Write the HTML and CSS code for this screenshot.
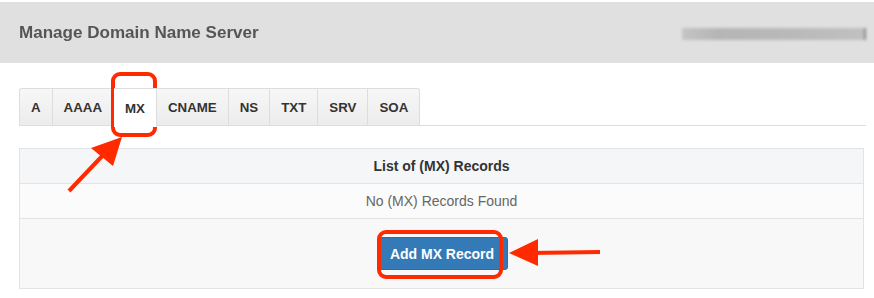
FILE: index.html
```html
<!DOCTYPE html>
<html>
<head>
<meta charset="utf-8">
<title>Manage Domain Name Server</title>
<link rel="stylesheet" href="styles.css">
</head>
<body>
    <div class="header">
        <h2 class="title">Manage Domain Name Server</h2>
        <div class="domain-blur"></div>
    </div>
    <div class="content">
        <div class="tabs">
            <a class="tab">A</a>
            <a class="tab">AAAA</a>
            <a class="tab active">MX</a>
            <a class="tab">CNAME</a>
            <a class="tab">NS</a>
            <a class="tab">TXT</a>
            <a class="tab">SRV</a>
            <a class="tab">SOA</a>
        </div>
        <div class="records">
            <div class="row row-head">List of (MX) Records</div>
            <div class="row row-empty">No (MX) Records Found</div>
            <div class="row row-action">
                <button class="btn-add">Add MX Record</button>
            </div>
        </div>
    </div>

    <!-- annotation marks drawn over the page -->
    <svg class="marks" width="874" height="298" viewBox="0 0 874 298">
        <rect x="113" y="74" width="42" height="61" rx="7" fill="none" stroke="#ff2a00" stroke-width="4"/>
        <line x1="69" y1="191" x2="106" y2="152" stroke="#ff2a00" stroke-width="4"/>
        <polygon points="122,137 91,148 113,166" fill="#ff2a00"/>
        <rect x="379" y="232" width="122" height="45" rx="7" fill="none" stroke="#ff2a00" stroke-width="4"/>
        <line x1="600" y1="252" x2="530" y2="253" stroke="#ff2a00" stroke-width="4"/>
        <polygon points="509,253 538,239 538,266" fill="#ff2a00"/>
    </svg>
</body>
</html>
```

FILE: styles.css
```css
body {
    margin: 0;
    font-family: "Liberation Sans", Arial, Helvetica, sans-serif;
    background: #fff;
    color: #333;
    position: relative;
    width: 874px;
    height: 298px;
    overflow: hidden;
}

.header {
    margin-top: 2px;
    height: 61px;
    background: #dfe0df;
    display: flex;
    align-items: center;
    justify-content: space-between;
    padding: 0 8px 0 19px;
}
.title {
    margin: 0;
    font-size: 16px;
    font-weight: bold;
    color: #555;
    transform: scaleX(1.065);
    transform-origin: left center;
}
.domain-blur {
    width: 182px;
    height: 12px;
    margin-top: 2px;
    background: linear-gradient(90deg, #c4c4c4, #b5b5b5 20%, #b9b9b9 60%, #c0c0c0);
    filter: blur(1.5px);
    border-right: 2px solid #888;
}

.content {
    padding: 25px 8px 0 19px;
}

.tabs {
    display: flex;
    height: 37px;
    border-bottom: 1px solid #ddd;
}
.tab {
    display: flex;
    align-items: center;
    padding: 0 11px;
    font-size: 13.3px;
    font-weight: bold;
    color: #333;
    background: linear-gradient(#f7f7f7, #ececec);
    border: 1px solid #ddd;
    border-bottom: none;
    border-left: none;
}
.tab:first-child {
    border-left: 1px solid #ddd;
    border-radius: 3px 0 0 0;
}
.tab:last-child {
    border-radius: 0 3px 0 0;
}
.tab.active {
    background: #fff;
    height: 38px;
    position: relative;
    z-index: 1;
}

.records {
    margin-top: 22px;
    margin-right: 2px;
    border: 1px solid #e3e3e3;
}
.row {
    display: flex;
    justify-content: center;
    align-items: center;
    font-size: 14px;
    border-top: 1px solid #e3e3e3;
}
.row:first-child {
    border-top: none;
}
.row-head {
    height: 34px;
    background: #f5f6f8;
    font-weight: bold;
    color: #333;
}
.row-empty {
    height: 34px;
    background: #fbfbfb;
    color: #666;
}
.row-action {
    height: 69px;
    background: #f8f8f8;
}
.btn-add {
    font-family: "Liberation Sans", Arial, sans-serif;
    font-size: 14px;
    font-weight: bold;
    color: #fff;
    background: #337ab7;
    border: 1px solid #2e6da4;
    border-radius: 3px;
    padding: 0 13px 0 10px;
    height: 33px;
    margin-left: 4px;
}

.marks {
    position: absolute;
    left: 0;
    top: 0;
    pointer-events: none;
}
```
